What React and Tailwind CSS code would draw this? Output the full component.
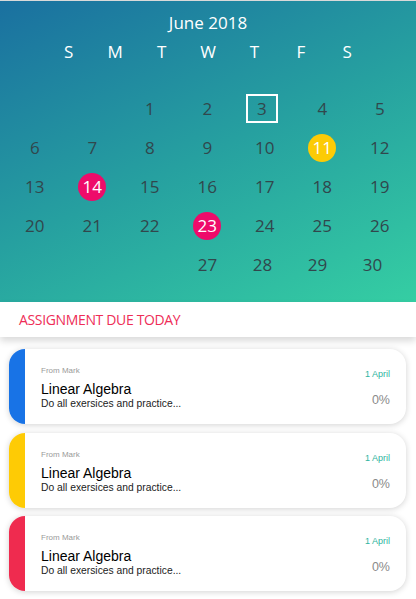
import React from "react";

const OPEN = { fontFamily: '"Open Sans", "Noto Sans", sans-serif' };
const ARIAL = { fontFamily: '"Liberation Sans", Arial, sans-serif' };

const rows = [
  [null, null, 1, 2, 3, 4, 5],
  [6, 7, 8, 9, 10, 11, 12],
  [13, 14, 15, 16, 17, 18, 19],
  [20, 21, 22, 23, 24, 25, 26],
];

function Day({ d }) {
  if (d === null) return <div className="h-[39px]" />;
  let inner;
  if (d === 3) {
    inner = (
      <span className="flex h-[29px] w-8 -translate-x-[3px] items-center justify-center border-2 border-white">
        3
      </span>
    );
  } else if (d === 11) {
    inner = (
      <span className="flex h-7 w-7 items-center justify-center rounded-full bg-[#fccb05] text-white">11</span>
    );
  } else if (d === 14 || d === 23) {
    inner = (
      <span className="flex h-7 w-7 items-center justify-center rounded-full bg-[#ee0b6a] text-white">{d}</span>
    );
  } else {
    inner = <span>{d}</span>;
  }
  return <div className="flex h-[39px] items-center justify-center">{inner}</div>;
}

function Card({ color }) {
  return (
    <div className="flex h-[75px] overflow-hidden rounded-[16px] bg-white shadow-[0_1px_6px_rgba(0,0,0,0.18)]">
      <div className="w-4 shrink-0" style={{ background: color }} />
      <div className="flex flex-1 justify-between pl-4 pr-4" style={ARIAL}>
        <div className="flex flex-col pt-[17px]">
          <div className="text-[8px] leading-[10px] text-[#9a9a9a]">From Mark</div>
          <div className="mt-[5px] text-[14px] leading-[16px] text-black">Linear Algebra</div>
          <div className="mt-px text-[10.3px] leading-[12px] text-[#222]">Do all exersices and practice...</div>
        </div>
        <div className="flex flex-col items-end pt-[19px]">
          <div className="text-[9px] leading-[12px] text-[#2fb3a0]">1 April</div>
          <div className="mt-[12px] text-[12.5px] leading-[16px] text-[#8a8a8a]">0%</div>
        </div>
      </div>
    </div>
  );
}

export default function App() {
  return (
    <div className="flex h-[599px] w-[416px] flex-col overflow-hidden bg-white">
      <div className="h-px bg-[#d9d9d9]" />
      <div
        className="h-[301px] bg-[linear-gradient(155deg,#1a70a0_0%,#26a0a0_50%,#35cea3_100%)]"
        style={OPEN}
      >
        <div className="pt-[10px] text-center text-[17px] leading-[24px] text-white">June 2018</div>
        <div className="mx-auto mt-[5px] grid w-[325px] grid-cols-7 text-center text-[17px] leading-[24px] text-white">
          {["S", "M", "T", "W", "T", "F", "S"].map((w, i) => (
            <div key={i}>{w}</div>
          ))}
        </div>
        <div className="mt-[25px] text-[17px] text-[#31474c]">
          {rows.map((r, i) => (
            <div key={i} className="grid grid-cols-[repeat(7,57.5px)] pl-[6px]">
              {r.map((d, j) => (
                <Day key={j} d={d} />
              ))}
            </div>
          ))}
          <div className="grid grid-cols-[repeat(4,55px)] pl-[180px]">
            {[27, 28, 29, 30].map((d) => (
              <Day key={d} d={d} />
            ))}
          </div>
        </div>
      </div>
      <div className="relative z-10 flex h-[35px] items-center bg-white pl-[19px] shadow-[0_4px_7px_rgba(0,0,0,0.15)]" style={OPEN}>
        <span className="text-[14px] tracking-[-0.35px] text-[#ee2d57]">ASSIGNMENT DUE TODAY</span>
      </div>
      <div className="flex flex-col gap-[8.5px] pl-[9px] pr-[10px] pt-[12px]">
        <Card color="#1873e6" />
        <Card color="#fecb05" />
        <Card color="#ef2b4f" />
      </div>
    </div>
  );
}
